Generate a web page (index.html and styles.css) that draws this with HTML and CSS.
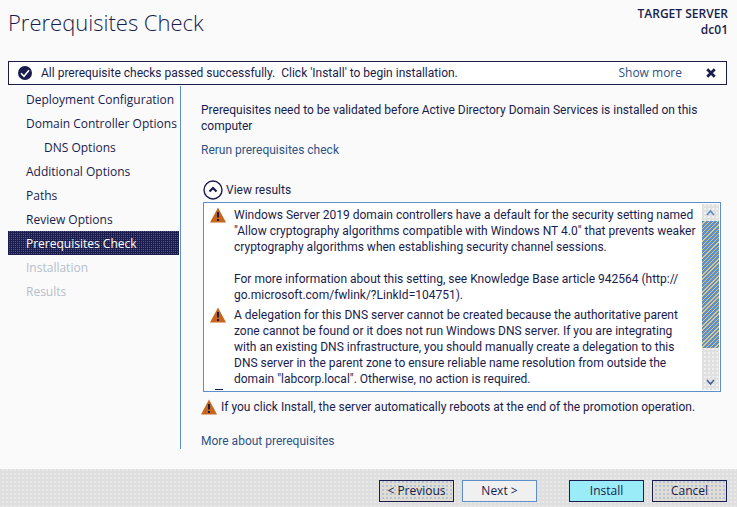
FILE: index.html
```html
<!DOCTYPE html>
<html lang="en">
<head>
<meta charset="utf-8">
<title>Prerequisites Check</title>
<link rel="stylesheet" href="styles.css">
</head>
<body>
<svg class="defs" aria-hidden="true">
  <symbol id="warning" viewBox="0 0 16 16">
    <path d="M8 0.5 L16 15.5 H0 Z" fill="#c8661c"/>
    <path d="M7 5h2v5.500h-2zM7 12h2v2h-2z" fill="#191c4d"/>
  </symbol>
</svg>
<div class="wizard">
  <header class="header">
    <h1 class="title">Prerequisites Check</h1>
    <p class="target"><span>TARGET SERVER</span><span>dc01</span></p>
  </header>
  <div class="banner">
    <svg class="banner-icon" viewBox="0 0 14 14" aria-hidden="true"><circle cx="7" cy="7" r="7" fill="#191c4d"/><path d="M3 7.200l3 3 5-6" fill="none" stroke="#fff" stroke-width="1.600"/></svg>
    <span class="banner-text">All prerequisite checks passed successfully.&nbsp; Click 'Install' to begin installation.</span>
    <a class="show-more" href="#">Show more</a>
    <button class="close" aria-label="Close"><svg viewBox="0 0 8 8"><path d="M1 1l6 6M7 1l-6 6" stroke="#191c4d" stroke-width="2.200"/></svg></button>
  </div>
  <div class="body">
    <nav class="steps">
      <a href="#">Deployment Configuration</a>
      <a href="#">Domain Controller Options</a>
      <a href="#" class="sub">DNS Options</a>
      <a href="#">Additional Options</a>
      <a href="#">Paths</a>
      <a href="#">Review Options</a>
      <a href="#" class="current" aria-current="step">Prerequisites Check</a>
      <a class="off">Installation</a>
      <a class="off">Results</a>
    </nav>
    <main class="content">
      <p class="intro">Prerequisites need to be validated before Active Directory Domain Services is installed on this<br>computer</p>
      <a class="link" href="#">Rerun prerequisites check</a>
      <button class="expander">
        <svg viewBox="0 0 20 20" aria-hidden="true"><circle cx="10" cy="10" r="9" fill="#fff" stroke="#191c4d" stroke-width="1.400"/><path d="M6.500 11.500L10 8l3.500 3.500" fill="none" stroke="#191c4d" stroke-width="2.200"/></svg>
        View results
      </button>
      <div class="results">
        <ul class="messages">
          <li><svg class="warn"><use href="#warning"/></svg>
            <p>Windows Server 2019 domain controllers have a default for the security setting named<br>"Allow cryptography algorithms compatible with Windows NT 4.0" that prevents weaker<br>cryptography algorithms when establishing security channel sessions.<br><br>For more information about this setting, see Knowledge Base article 942564 (http://<br>go.microsoft.com/fwlink/?LinkId=104751).</p></li>
          <li><svg class="warn"><use href="#warning"/></svg>
            <p>A delegation for this DNS server cannot be created because the authoritative parent<br>zone cannot be found or it does not run Windows DNS server. If you are integrating<br>with an existing DNS infrastructure, you should manually create a delegation to this<br>DNS server in the parent zone to ensure reliable name resolution from outside the<br>domain "labcorp.local". Otherwise, no action is required.</p></li>
          <li class="next-message"></li>
        </ul>
        <div class="scrollbar" aria-hidden="true">
          <svg viewBox="0 0 17 17"><path d="M5 11l3.500-4 3.500 4" fill="none" stroke="#5f8fc8" stroke-width="1.800"/></svg>
          <div class="thumb"></div>
          <div class="track"></div>
          <svg viewBox="0 0 17 17"><path d="M5 7l3.500 4 3.500-4" fill="none" stroke="#3c6499" stroke-width="1.600"/></svg>
        </div>
      </div>
      <p class="notice"><svg class="warn"><use href="#warning"/></svg>If you click Install, the server automatically reboots at the end of the promotion operation.</p>
      <a class="link" href="#">More about prerequisites</a>
    </main>
  </div>
  <footer class="footer">
    <button class="btn">&lt; Previous</button>
    <button class="btn next">Next &gt;</button>
    <button class="btn install">Install</button>
    <button class="btn">Cancel</button>
  </footer>
</div>
</body>
</html>
```
FILE: styles.css
```css
* { box-sizing: border-box; }
body {
  margin: 0;
  font: 12px/16px "Open Sans", "Noto Sans", sans-serif;
  color: #191c4d;
  background: #fafafa;
}
h1, p, ul { margin: 0; padding: 0; }
ul { list-style: none; }
a { color: inherit; text-decoration: none; }
button { font: inherit; color: inherit; padding: 0; border: 0; background: none; }
.defs { position: absolute; width: 0; height: 0; }
.wizard { display: flex; flex-direction: column; min-height: 100vh; }

.header { display: flex; justify-content: space-between; padding: 6px 9px 0 8px; height: 61px; }
.title { font-size: 22px; line-height: 32px; font-weight: 300; white-space: nowrap; }
.target { display: flex; flex-direction: column; text-align: right; font-weight: 600; }

.banner {
  display: flex;
  align-items: center;
  height: 24px;
  margin: 0 10px 0 8px;
  padding: 0 10px 0 9px;
  border: 1px solid #191c4d;
  background: #fff;
  white-space: nowrap;
}
.banner-icon { width: 14px; height: 14px; margin-right: 9px; }
.banner-text { flex: 1; font-family: Roboto, sans-serif; }
.show-more { color: #2f5285; }
.close { display: flex; margin-left: 24px; }
.close svg { width: 10px; height: 10px; }

.body { display: flex; flex: 1; padding-top: 1px; margin: 0 10px 20px 8px; }
.steps {
  display: flex;
  flex-direction: column;
  flex: 0 0 173px;
  padding: 1px 1px 0 0;
  border-right: 1px solid #5f8fc8;
  line-height: 22px;
  white-space: nowrap;
}
.steps a { padding: 2px 0 0 18px; }
.steps .sub { padding-left: 36px; }
.steps .current {
  color: #fff;
  background: conic-gradient(#41609a 25%, #191c4d 0) 0 0 / 2px 2px;
}
.steps .off { color: #b4bfcc; }

.content {
  display: flex;
  flex-direction: column;
  align-items: flex-start;
  flex: 1;
  min-width: 0;
  padding: 16px 6px 0 20px;
  font-family: Roboto, sans-serif;
  white-space: nowrap;
}
.link { color: #2f5285; }
.intro { margin-bottom: 8px; }
.expander { display: flex; align-items: center; gap: 3px; margin: 22px 0 2px 2px; }
.expander svg { width: 20px; height: 20px; }

.results {
  display: flex;
  align-self: stretch;
  height: 190px;
  margin-left: 2px;
  padding: 1px;
  border: 1px solid #5f8fc8;
  background: #fff;
}
.messages { flex: 1; min-width: 0; overflow: hidden; padding: 3px 0 0 5px; }
.messages li { display: flex; gap: 8px; margin-bottom: 4px; }
.warn { width: 16px; height: 16px; flex: none; }
.messages .next-message { width: 8px; height: 2px; margin: -2px 0 0 5px; background: #191c4d; }
.scrollbar { display: flex; flex-direction: column; width: 17px; background: conic-gradient(#f0f0f0 25%, #e0e0e0 0) 0 0 / 4px 4px; }
.scrollbar svg { width: 17px; height: 17px; }
.thumb { flex: 127; background: repeating-linear-gradient(135deg, #5f8fc8 0 2px, #d8c78a 2px 3px); }
.track { flex: 25; }

.notice { display: flex; gap: 4px; align-items: center; margin: 7px 0 18px; }

.footer {
  display: flex;
  gap: 8px;
  justify-content: flex-end;
  padding: 11px 10px 6px;
  background: conic-gradient(#e8e8e8 25%, #dfdfdf 0) 0 0 / 4px 4px;
}
.btn {
  width: 75px;
  height: 22px;
  border: 1px solid #191c4d;
  background: conic-gradient(#b4c3d8 25%, #dedede 0 50%, #e5dcc0 0 75%, #dedede 0) 0 0 / 4px 4px;
}
.btn.next { border-color: #5f8fc8; background: #f0f0f0; }
.btn.install { margin-left: 24px; background: #9aedf8; }
```
